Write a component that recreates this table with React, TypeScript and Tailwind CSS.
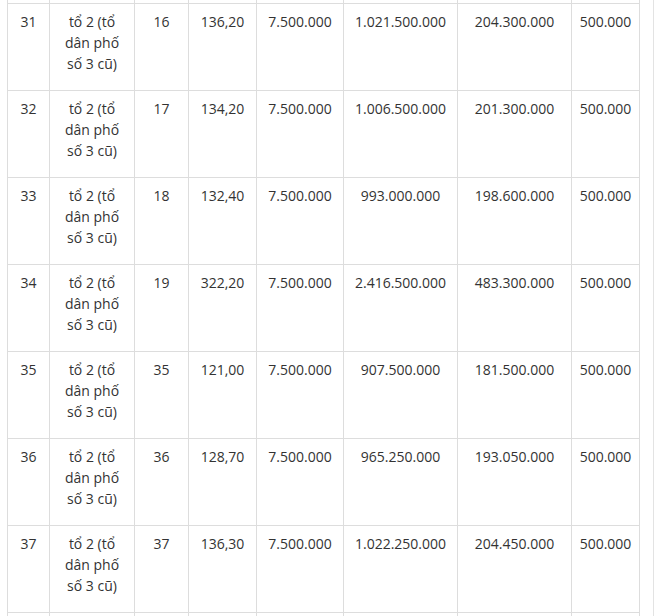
import React from "react";

const rows = [
  ["31", "16", "136,20", "7.500.000", "1.021.500.000", "204.300.000", "500.000"],
  ["32", "17", "134,20", "7.500.000", "1.006.500.000", "201.300.000", "500.000"],
  ["33", "18", "132,40", "7.500.000", "993.000.000", "198.600.000", "500.000"],
  ["34", "19", "322,20", "7.500.000", "2.416.500.000", "483.300.000", "500.000"],
  ["35", "35", "121,00", "7.500.000", "907.500.000", "181.500.000", "500.000"],
  ["36", "36", "128,70", "7.500.000", "965.250.000", "193.050.000", "500.000"],
  ["37", "37", "136,30", "7.500.000", "1.022.250.000", "204.450.000", "500.000"],
];

const widths = [42, 85, 54, 68, 87, 114, 114, 68];

function EmptyRow({ h }: { h: string }) {
  return (
    <tr className={h}>
      {widths.map((_, i) => (
        <td key={i} className="border border-[#dddddd] p-0" />
      ))}
    </tr>
  );
}

export default function App() {
  return (
    <div
      className="w-[656px] h-[616px] overflow-hidden bg-white text-[14px] leading-[21px] text-[#333]"
      style={{ fontFamily: '"Open Sans", "Noto Sans", sans-serif' }}
    >
      <div className="ml-[7px] w-[647px] border-r border-[#e3e3e3] h-[616px] overflow-hidden">
        <table className="table-fixed border-collapse w-[633px] mt-[-84px]">
          <colgroup>
            {widths.map((w, i) => (
              <col key={i} style={{ width: w }} />
            ))}
          </colgroup>
          <tbody>
            <EmptyRow h="h-[87px]" />
            {rows.map((r) => (
              <tr key={r[0]} className="h-[87px]">
                <td className="border border-[#dddddd] align-top text-center px-[6px] pt-[7px]">{r[0]}</td>
                <td className="border border-[#dddddd] align-top text-center px-[8px] pt-[7px]">
                  tổ 2 (tổ dân phố số 3 cũ)
                </td>
                {r.slice(1).map((c, i) => (
                  <td key={i} className="border border-[#dddddd] align-top text-center px-[4px] pt-[7px]">
                    {c}
                  </td>
                ))}
              </tr>
            ))}
            <EmptyRow h="h-[87px]" />
          </tbody>
        </table>
      </div>
    </div>
  );
}
